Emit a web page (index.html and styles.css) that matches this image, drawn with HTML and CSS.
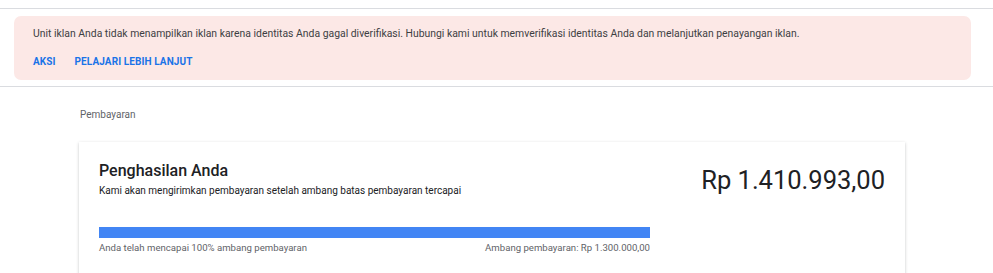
FILE: index.html
```html
<!DOCTYPE html>
<html>
<head>
	<meta charset="UTF-8">
	<meta name="viewport" content="width=device-width, initial-scale=1">
	<title>Pembayaran</title>
	<link rel="stylesheet" href="styles.css">
</head>
<body>

	<div class="topbar"></div>

	<!-- Verification alert -->
	<div class="alert-wrap">
		<div class="alert">
			<p class="alert-text">Unit iklan Anda tidak menampilkan iklan karena identitas Anda gagal diverifikasi. Hubungi kami untuk memverifikasi identitas Anda dan melanjutkan penayangan iklan.</p>
			<div class="alert-actions">
				<a class="alert-link">AKSI</a>
				<a class="alert-link">PELAJARI LEBIH LANJUT</a>
			</div>
		</div>
	</div>

	<div class="page">
		<p class="crumb">Pembayaran</p>

		<div class="card">
			<div class="card-top">
				<div class="card-head">
					<h2>Penghasilan Anda</h2>
					<p class="sub">Kami akan mengirimkan pembayaran setelah ambang batas pembayaran tercapai</p>
				</div>
				<div class="amount">Rp 1.410.993,00</div>
			</div>

			<div class="progress">
				<div class="bar"><div class="fill" style="width: 100%"></div></div>
				<div class="bar-labels">
					<span>Anda telah mencapai 100% ambang pembayaran</span>
					<span>Ambang pembayaran: Rp 1.300.000,00</span>
				</div>
			</div>
		</div>
	</div>

</body>
</html>
```

FILE: styles.css
```css
body {
	margin: 0;
	padding: 0;
	overflow: hidden;
	background-color: #fff;
	font-family: 'Roboto', 'Liberation Sans', sans-serif;
	color: #202124;
}
p, h2 {
	margin: 0;
}

.topbar {
	height: 8px;
	border-bottom: 1px solid #dadce0;
}

/* ALERT */
.alert-wrap {
	padding: 7px 22px 6px 14px;
	border-bottom: 1px solid #dadce0;
}
.alert {
	background-color: #fce8e6;
	border-radius: 7px;
	padding: 11px 19px 11px 19px;
	height: 42px;
}
.alert-text {
	font-size: 10.4px;
	line-height: 14px;
	color: #3c4043;
}
.alert-actions {
	margin-top: 15px;
	display: flex;
	gap: 19px;
}
.alert-link {
	font-size: 10px;
	font-weight: 700;
	color: #1a73e8;
	letter-spacing: 0.1px;
	cursor: pointer;
}

/* PAGE */
.page {
	padding: 0 88px 0 79px;
}
.crumb {
	font-size: 10px;
	color: #5f6368;
	padding: 21px 0 0 1px;
	line-height: 14px;
}
.card {
	margin-top: 20px;
	background-color: #fff;
	box-shadow: 0 1px 3px rgba(60,64,67,0.25), 0 1px 1px rgba(60,64,67,0.1);
	padding: 19px 20px 30px 20px;
	height: 200px;
}
.card-top {
	display: flex;
	justify-content: space-between;
	align-items: flex-start;
}
.card-head h2 {
	font-size: 16px;
	font-weight: 500;
	line-height: 20px;
}
.card-head .sub {
	font-size: 10px;
	line-height: 14px;
	margin-top: 3px;
}
.amount {
	font-size: 25.5px;
	line-height: 30px;
	margin-top: 4px;
}

.progress {
	width: 551px;
	margin-top: 29px;
}
.bar {
	height: 11px;
	background-color: #e8eaed;
}
.fill {
	height: 100%;
	background-color: #4285f4;
}
.bar-labels {
	display: flex;
	justify-content: space-between;
	font-size: 9.6px;
	color: #5f6368;
	margin-top: 4px;
}
```
